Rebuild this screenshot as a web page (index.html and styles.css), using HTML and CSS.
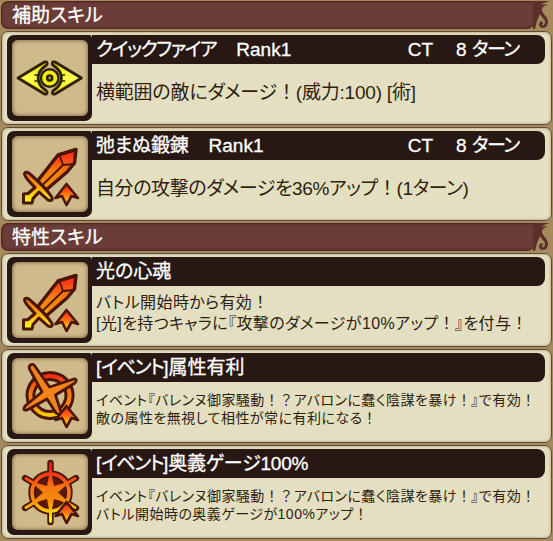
FILE: index.html
```html
<!DOCTYPE html>
<html lang="ja">
<head>
  <meta charset="UTF-8" />
  <meta name="viewport" content="width=device-width, initial-scale=1.0" />
  <title>スキル</title>
  <link rel="stylesheet" href="styles.css">
</head>
<body>
  <!-- shared icon parts -->
  <svg class="defs" width="0" height="0">
    <defs>
      <linearGradient id="fire" gradientUnits="userSpaceOnUse" x1="0" y1="12" x2="0" y2="66">
        <stop offset="0" stop-color="#ff1616" />
        <stop offset=".42" stop-color="#f47b10" />
        <stop offset=".65" stop-color="#f78c0c" />
        <stop offset="1" stop-color="#ffff10" />
      </linearGradient>
      <linearGradient id="arrow" x1="0" y1="0" x2="0" y2="1">
        <stop offset="0" stop-color="#ff1010" />
        <stop offset=".55" stop-color="#fa8110" />
        <stop offset="1" stop-color="#fff010" />
      </linearGradient>
      <linearGradient id="eye" x1="0" y1="0" x2="0" y2="1">
        <stop offset="0" stop-color="#e8dc00" />
        <stop offset=".5" stop-color="#ffff50" />
        <stop offset="1" stop-color="#ece000" />
      </linearGradient>
      <symbol id="up" viewBox="0 0 76 76">
        <path d="M54.500 48 66 62l-6.500-2-5 9-4.500-9-6.500 2z" fill="url(#arrow)" stroke="#4a1608" stroke-width="2.600" stroke-linejoin="round" />
      </symbol>
      <symbol id="sword" viewBox="0 0 76 76">
        <g stroke="#4a1608" stroke-linejoin="round" stroke-linecap="round">
          <path d="M46 19 64 13.500 62.500 27 55 36 34 54l-8.500-9z" fill="url(#fire)" stroke-width="3.400" />
          <path d="M47.500 19 51 29 62.500 28M51 29 30 49.500" fill="none" stroke-width="1.800" />
          <path d="M11.500 67v-9l4.500-.500 7-6C18 46.500 12 40 12.500 37.500c1-2.500 4-1 6 1C26 45 36 55 40 61.500c1 3-2 4-4.500 2L27 56l-6 6.500-1 4.500z" fill="url(#fire)" stroke-width="3" />
        </g>
        <use href="#up" />
      </symbol>
      <symbol id="tail" viewBox="0 0 18 28">
        <path d="M0 0h17c-4 1-7 2-9 4 3-1 5-1 7 0-3 0-6 2-6 5 0 4 6 6 6 12 0 3-2 6-5 6-4 0-5-4-3-6 1-1 3-1 3 1l-1 2c2 1 3-1 3-3 0-3-4-5-5-8L4 20 2 28H0z" />
      </symbol>
    </defs>
  </svg>

  <div class="skills">
    <div class="heading">
      <h2 class="heading-bar">補助スキル</h2>
      <svg class="heading-tail"><use href="#tail" /></svg>
    </div>

    <div class="card">
      <div class="icon">
        <svg viewBox="0 0 76 76">
          <g fill="url(#eye)" stroke="#2d2204" stroke-width="2.800" stroke-linejoin="round" stroke-linecap="round">
            <path d="M6 38 32.500 22c3-1 3.500 2 1.500 3.500-3 2-6 5-7 8l-1 4.500 1 4.500c1 3 4 6 7 8 2 1.500 1.500 4.500-1.500 3.500z" />
            <path d="M69.500 38 43 22c-3-1-3.500 2-1.500 3.500 3 2 6 5 7 8l1 4.500-1 4.500c-1 3-4 6-7 8-2 1.500-1.500 4.500 1.500 3.500z" />
            <path d="M23 35h3M23 41h3M49.500 35h3M49.500 41h3" fill="none" stroke-width="1.600" />
            <circle cx="37.700" cy="38" r="8.800" fill="#f4ec14" stroke-width="2.400" />
            <circle cx="37.700" cy="38" r="2.600" fill="#9d9240" stroke-width="2.400" />
          </g>
        </svg>
      </div>
      <div class="body">
        <h3 class="title"><span class="tight">クイックファイア</span><span class="rank">Rank1</span><span class="ct">CT</span><span class="turn">8 <span class="tight">ターン</span></span></h3>
        <p class="desc large">横範囲の敵にダメージ<span class="full">！</span>(威力:100) [術]</p>
      </div>
    </div>

    <div class="card">
      <div class="icon"><svg viewBox="0 0 76 76"><use href="#sword" /></svg></div>
      <div class="body">
        <h3 class="title"><span class="snug">弛まぬ鍛錬</span><span class="rank">Rank1</span><span class="ct">CT</span><span class="turn">8 <span class="tight">ターン</span></span></h3>
        <p class="desc large narrow">自分の攻撃のダメージを36%アップ<span class="full">！</span>(1ターン)</p>
      </div>
    </div>

    <div class="heading">
      <h2 class="heading-bar">特性スキル</h2>
      <svg class="heading-tail"><use href="#tail" /></svg>
    </div>

    <div class="card">
      <div class="icon"><svg viewBox="0 0 76 76"><use href="#sword" /></svg></div>
      <div class="body">
        <h3 class="title"><span>光の心魂</span></h3>
        <p class="desc medium">バトル開始時から有効<span class="full">！</span><br>[光]を持つキャラに『攻撃のダメージが10%アップ<span class="full">！</span>』を付与<span class="full">！</span></p>
      </div>
    </div>

    <div class="card">
      <div class="icon">
        <svg viewBox="0 0 76 76">
          <g stroke="#4a1608" stroke-linejoin="round">
            <path fill-rule="evenodd" d="M38 14.500a23 23 0 1 0 .1 0zM38 21.500a16 16 0 1 1-.1 0z" fill="url(#fire)" stroke-width="3" />
            <path d="M18.500 7q3-2 5 2L37.500 29l24.500-8q4 0 1 4L43.500 37l5.500 17q-1 4-5 1l-9-14-20 11q-5 1-2-4l17-14L17.500 11q-1-3 1-4z" fill="#f18418" stroke-width="2.800" />
          </g>
          <use href="#up" />
        </svg>
      </div>
      <div class="body">
        <h3 class="title"><span>[<span class="tight">イベント</span>]属性有利</span></h3>
        <p class="desc small">イベント『バレンヌ御家騒動<span class="full">！？</span>アバロンに蠢く陰謀を暴け<span class="full">！</span>』で有効<span class="full">！</span><br>敵の属性を無視して相性が常に有利になる<span class="full">！</span></p>
      </div>
    </div>

    <div class="card">
      <div class="icon">
        <svg viewBox="0 0 76 76">
          <g fill="none" stroke-linecap="round" stroke-linejoin="round">
            <path d="M38.510 9 38.500 68M13 24l51 30M64 24 13 54" stroke="#4a1608" stroke-width="6.400" />
            <circle cx="38.500" cy="38.500" r="18.500" fill="#5b1a08" stroke="#4a1608" stroke-width="7.500" />
            <circle cx="38.500" cy="38.500" r="18.500" stroke="url(#fire)" stroke-width="3.600" />
            <path d="M38.510 9.500 38.500 67.500M14 24.500l49 29M63 24.500l-49 29" stroke="url(#fire)" stroke-width="2.800" />
            <path d="M38.500 14 42 32 59 27 46 38.500 59 50 42 45 38.500 63 35 45 18 50 31 38.500 18 27 35 32z" fill="url(#fire)" />
          </g>
          <use href="#up" />
        </svg>
      </div>
      <div class="body">
        <h3 class="title"><span class="snug">[<span class="tight">イベント</span>]奥義ゲージ100%</span></h3>
        <p class="desc small">イベント『バレンヌ御家騒動<span class="full">！？</span>アバロンに蠢く陰謀を暴け<span class="full">！</span>』で有効<span class="full">！</span><br>バトル開始時の奥義ゲージが100%アップ<span class="full">！</span></p>
      </div>
    </div>
  </div>
</body>
</html>
```
FILE: styles.css
```css
* {
  box-sizing: border-box;
}
body {
  margin: 0;
  height: 541px;
  overflow: hidden;
  background: #a68a5c;
  font-family: "Liberation Sans", "Noto Sans CJK JP", sans-serif;
  font-feature-settings: "palt";
}
.defs {
  position: absolute;
}
.skills {
  display: flex;
  flex-direction: column;
  gap: 2px;
  padding: 1px 1px 2px;
}
h2, h3, p {
  margin: 0;
  white-space: nowrap;
}
.heading {
  display: flex;
  height: 28px;
}
.heading-bar {
  width: 534px;
  padding-left: 10px;
  border: 1px solid #4e2625;
  border-right: none;
  border-radius: 7px 0 8px 7px;
  background: #6b3d38;
  box-shadow: inset 0 0 3px #4e2625;
  color: #fff;
  font-size: 19px;
  font-weight: 400;
  line-height: 27px;
  -webkit-text-stroke: 0.3px #fff;
}
.heading-tail {
  width: 18px;
  height: 28px;
  margin-left: -2px;
  fill: #5b302c;
}
.card {
  display: flex;
  height: 94px;
  padding: 3px 6px 3px 5px;
  border: 1px solid #5e4b38;
  border-radius: 7px;
  background: #e5dfc2;
  box-shadow: inset 0 0 3px #9d9276;
}
.icon {
  flex: none;
  width: 85px;
  height: 86px;
  padding: 5px 4px 5px 5px;
  border-radius: 7px 3px 7px 7px;
  background: #281813;
}
.icon svg {
  display: block;
  width: 76px;
  height: 76px;
  border-radius: 6px;
  background: #cfba8b;
  box-shadow: inset 0 0 4px #6c5135;
}
.body {
  flex: 1;
}
.title {
  display: flex;
  height: 29px;
  padding-left: 4px;
  border-radius: 0 8px 8px 0;
  background: #281813;
  color: #fff;
  font-size: 19px;
  font-weight: 400;
  line-height: 29px;
  -webkit-text-stroke: 0.3px #fff;
}
.tight {
  letter-spacing: -1.4px;
}
.snug {
  letter-spacing: -0.2px;
}
.rank {
  margin-left: 20px;
}
.ct {
  margin-left: auto;
}
.turn {
  width: 64px;
  margin: 0 25px 0 23px;
}
.desc {
  padding-left: 4px;
  color: #2d1e10;
}
.full {
  font-feature-settings: "palt" 0;
}
.large {
  padding-top: 15px;
  font-size: 19px;
  line-height: 28px;
  letter-spacing: -0.2px;
}
.narrow {
  letter-spacing: -0.4px;
}
.medium {
  padding-top: 6px;
  font-size: 16px;
  line-height: 21px;
  letter-spacing: 0.4px;
}
.small {
  padding-top: 9px;
  font-size: 14px;
  line-height: 18px;
  letter-spacing: 0.47px;
}
```
